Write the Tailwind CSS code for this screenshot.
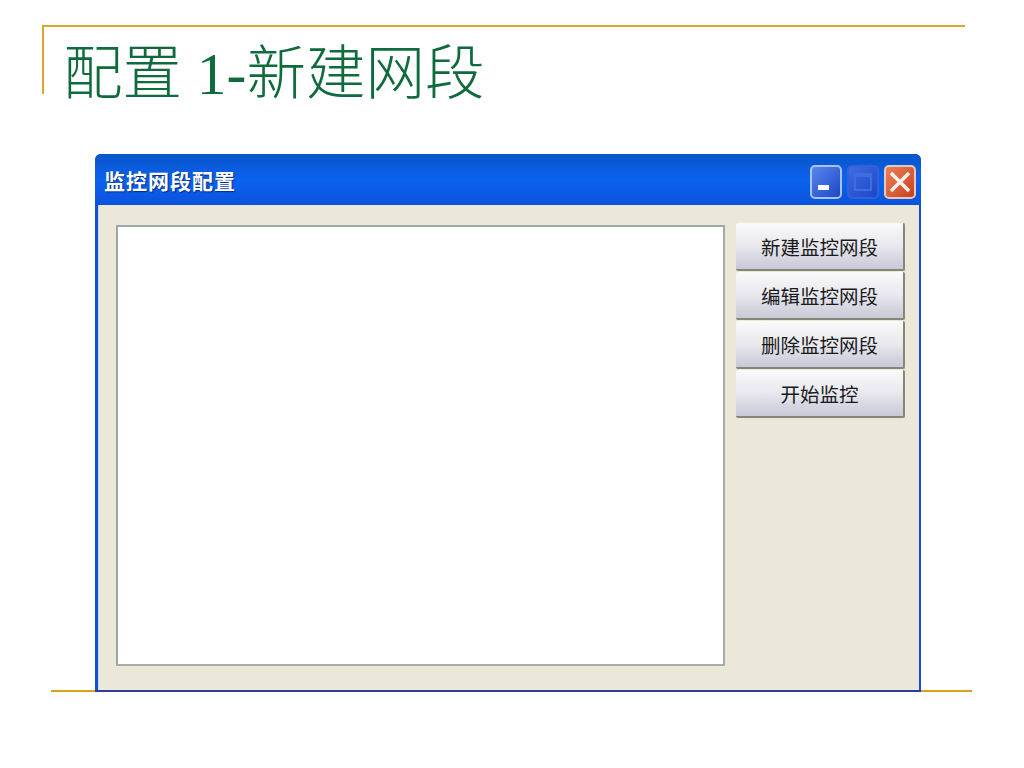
<!DOCTYPE html>
<html lang="zh-CN">
<head>
  <meta charset="UTF-8" />
  <title>配置 1-新建网段</title>
  <script src="https://cdn.jsdelivr.net/npm/@tailwindcss/browser@4"></script>
</head>
<body class="relative w-[1024px] h-[768px] overflow-hidden bg-white font-['Liberation_Sans','Noto_Sans_CJK_SC',sans-serif]">

  <!-- slide frame: bottom rule sits behind the window -->
  <div class="absolute left-[51px] top-[690px] w-[921px] h-[2px] bg-[#d9a21c]"></div>

  <!-- slide title -->
  <header class="relative ml-[42px] mt-[25px] w-[923px] h-[69px] border-t-2 border-l-2 border-[#d8a82c]">
    <h1 class="pl-[19px] pt-[12px] text-[59.5px] leading-[70px] font-light text-[#0f6b3c] whitespace-nowrap font-['Liberation_Serif','Noto_Sans_CJK_SC',serif]">配置 1-新建网段</h1>
  </header>

  <!-- XP style window -->
  <section class="relative ml-[95px] mt-[60px] w-[826px] h-[538px] flex flex-col rounded-t-[6px] overflow-hidden bg-[#0f50d8] border-b-2 border-[#2a3f9c]">
    <div class="h-[51px] shrink-0 flex items-center justify-between pl-[9px] pr-[5px] pt-[5px] bg-gradient-to-b from-[#0a55c8] via-[#0b62ee] to-[#0a52dc]">
      <span class="text-[21px] leading-[28px] font-bold text-white [text-shadow:1px_1px_1px_#0a2a80] tracking-[1px]">监控网段配置</span>
      <div class="flex gap-[5px] items-center">
        <div class="w-[32px] h-[34px] rounded-[5px] border-2 border-[#a8c4f4] bg-gradient-to-br from-[#5a86ec] to-[#1c46c8] flex items-end pl-[6px] pb-[7px]">
          <div class="w-[11px] h-[5px] bg-white"></div>
        </div>
        <div class="w-[32px] h-[34px] rounded-[5px] border-2 border-[#3460d8] bg-gradient-to-br from-[#3f6ce0] to-[#1c46c8] flex items-center justify-center">
          <div class="w-[18px] h-[18px] border-2 border-t-4 border-[#3f6de0]"></div>
        </div>
        <div class="w-[32px] h-[34px] rounded-[5px] border-2 border-[#e8c8b8] bg-gradient-to-br from-[#e8805a] to-[#c8401c] flex items-center justify-center">
          <svg width="22" height="22" viewBox="0 0 22 22" fill="none" stroke="#fbeee6" stroke-width="3.6"><path d="M2 2 20 20M20 2 2 20" /></svg>
        </div>
      </div>
    </div>

    <div class="flex-1 ml-[3px] mr-[2px] flex gap-[11px] pl-[17px] pt-[20px] bg-[#ebe8d9] border-l border-[#c8d8e8]">
      <div class="w-[609px] h-[441px] bg-white border-2 border-[#9aa8a8] border-r-[#a8aca4] border-b-[#a8aca4]"></div>
      <div class="w-[169px] flex flex-col gap-[1px] -mt-[2px]">
        <button class="h-[48px] pt-[5px] rounded-[2px] bg-gradient-to-b from-[#fafafa] via-[#e8e8ee] to-[#c8c8d8] border-r-2 border-b-2 border-[#85857a] text-[19.5px] text-[#1a1a1a]">新建监控网段</button>
        <button class="h-[48px] pt-[5px] rounded-[2px] bg-gradient-to-b from-[#fafafa] via-[#e8e8ee] to-[#c8c8d8] border-r-2 border-b-2 border-[#85857a] text-[19.5px] text-[#1a1a1a]">编辑监控网段</button>
        <button class="h-[48px] pt-[5px] rounded-[2px] bg-gradient-to-b from-[#fafafa] via-[#e8e8ee] to-[#c8c8d8] border-r-2 border-b-2 border-[#85857a] text-[19.5px] text-[#1a1a1a]">删除监控网段</button>
        <button class="h-[48px] pt-[5px] rounded-[2px] bg-gradient-to-b from-[#fafafa] via-[#e8e8ee] to-[#c8c8d8] border-r-2 border-b-2 border-[#85857a] text-[19.5px] text-[#1a1a1a]">开始监控</button>
      </div>
    </div>
  </section>

</body>
</html>
